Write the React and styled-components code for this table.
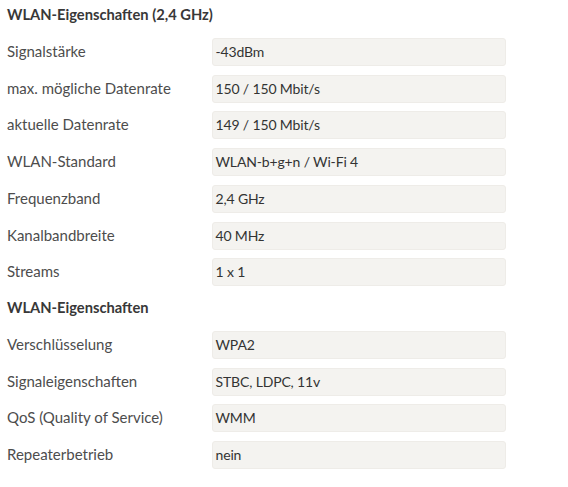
import React from "react";
import styled, { createGlobalStyle } from "styled-components";

const Global = createGlobalStyle`
  html, body { margin: 0; padding: 0; background: #fff; }
  body { font-family: Lato, "Liberation Sans", sans-serif; }
`;

const Page = styled.div`
  width: 568px;
  padding: 2px 0 0 7px;
  box-sizing: border-box;
  display: flex;
  flex-direction: column;
  gap: 8.75px;
`;

const Heading = styled.div`
  height: 27px;
  box-sizing: border-box;
  padding-bottom: 3px;
  display: flex;
  align-items: center;
  font-size: 14.7px;
  font-weight: 700;
  color: #383838;
`;

const Row = styled.div`
  display: grid;
  grid-template-columns: 205px 294px;
  align-items: center;
  height: 28px;
`;

const Label = styled.div`
  font-size: 15px;
  padding-bottom: 2px;
  color: #4d4d4d;
`;

const Value = styled.div`
  height: 28px;
  box-sizing: border-box;
  padding: 0 2px 1px 2.5px;
  display: flex;
  align-items: center;
  background: #f4f3f0;
  border: 1px solid #eeece8;
  border-radius: 3px;
  font-size: 14px;
  letter-spacing: -0.15px;
  color: #333;
`;

const groups = [
  {
    title: "WLAN-Eigenschaften (2,4 GHz)",
    rows: [
      ["Signalstärke", "-43dBm"],
      ["max. mögliche Datenrate", "150 / 150 Mbit/s"],
      ["aktuelle Datenrate", "149 / 150 Mbit/s"],
      ["WLAN-Standard", "WLAN-b+g+n / Wi-Fi 4"],
      ["Frequenzband", "2,4 GHz"],
      ["Kanalbandbreite", "40 MHz"],
      ["Streams", "1 x 1"],
    ],
  },
  {
    title: "WLAN-Eigenschaften",
    rows: [
      ["Verschlüsselung", "WPA2"],
      ["Signaleigenschaften", "STBC, LDPC, 11v"],
      ["QoS (Quality of Service)", "WMM"],
      ["Repeaterbetrieb", "nein"],
    ],
  },
];

export default function App() {
  return (
    <>
      <Global />
      <Page>
        {groups.map((g) => (
          <React.Fragment key={g.title}>
            <Heading>{g.title}</Heading>
            {g.rows.map(([l, v]) => (
              <Row key={l}>
                <Label>{l}</Label>
                <Value>{v}</Value>
              </Row>
            ))}
          </React.Fragment>
        ))}
      </Page>
    </>
  );
}
